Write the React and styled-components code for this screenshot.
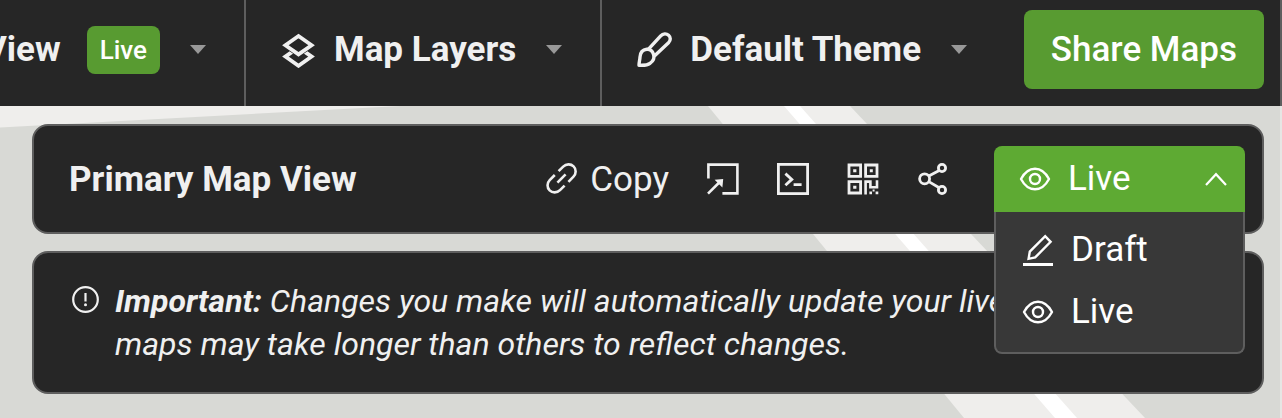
import React, { useState } from "react";
import styled, { createGlobalStyle } from "styled-components";

const GlobalStyle = createGlobalStyle`
  * {
    box-sizing: border-box;
  }

  html, body, #root {
    height: 100%;
  }

  body {
    margin: 0;
    overflow: hidden;
    background: #d8d9d5;
    color: #f0f0f0;
    font-family: Roboto, "Liberation Sans", sans-serif;
  }

  button {
    font-family: inherit;
    color: inherit;
    border: none;
    background: transparent;
    cursor: pointer;
  }
`;

const Page = styled.div`
  display: flex;
  flex-direction: column;
  min-height: 100%;
`;

const TopBar = styled.header`
  display: flex;
  background: #262626;
  border-right: 2px solid #5e5e5e;
`;

const BarMenu = styled.button`
  display: flex;
  align-items: center;
  justify-content: ${props => props.$alignEnd ? "flex-end" : "flex-start"};
  width: ${props => props.$alignEnd ? "246px" : "auto"};
  padding: 10px 38px 17px 35px;
  border-right: ${props => props.$last ? "none" : "2px solid #5e5e5e"};
  font-size: 35px;
  font-weight: 700;
  line-height: 43px;
  white-space: nowrap;
`;

const BarLabel = styled.span`
  margin: 0 30px 0 ${props => props.$withIcon ? "17px" : "0"};
`;

const Badge = styled.span`
  margin: 0 30px 0 -4px;
  padding: 0 13px;
  border-radius: 8px;
  background: #589b31;
  color: #fff;
  font-size: 26px;
  font-weight: 500;
  line-height: 48px;
`;

const Caret = styled.span`
  border-top: 9px solid #989898;
  border-left: 8px solid transparent;
  border-right: 8px solid transparent;
`;

const ShareArea = styled.div`
  flex: 1;
  display: flex;
  justify-content: flex-end;
  padding: 10px 16px 17px 0;
`;

const ShareButton = styled.button`
  padding: 0 27px;
  border-radius: 8px;
  background: #589b31;
  color: #fff;
  font-size: 35px;
  font-weight: 500;
  line-height: 79px;
  white-space: nowrap;
`;

const MapArea = styled.main`
  position: relative;
  flex: 1;
  display: flex;
  flex-direction: column;
  gap: 17px;
  padding: 18px 16px 24px 32px;
  border-right: 2px solid #e6e6e4;
`;

const MapDrawing = styled.svg`
  position: absolute;
  top: 0;
  left: 0;
`;

const Panel = styled.section`
  position: relative;
  display: flex;
  border: 2px solid #5e5e5e;
  border-radius: 16px;
  background: #262626;
`;

const ViewPanel = styled(Panel)`
  z-index: 1;
  align-items: center;
  padding: 20px 17px 20px 35px;
`;

const NoticePanel = styled(Panel)`
  align-items: flex-start;
  gap: 16px;
  padding: 27px 35px 26px 38px;
`;

const ViewTitle = styled.h1`
  flex: 1;
  margin: 0;
  font-size: 35px;
  font-weight: 700;
  line-height: 43px;
`;

const Actions = styled.div`
  display: flex;
  align-items: center;
  gap: 38px;
  margin-right: 45px;
`;

const ActionButton = styled.button`
  display: flex;
  align-items: center;
  gap: 12px;
  padding: 0;
  font-size: 35px;
  line-height: 43px;
`;

const Dropdown = styled.div`
  position: relative;
  width: 251px;
`;

const DropdownToggle = styled.button`
  display: flex;
  align-items: center;
  gap: 17px;
  width: 100%;
  padding: 0 18px 0 25px;
  border-radius: ${props => props.$open ? "8px 8px 0 0" : "8px"};
  background: #5eaa33;
  color: #fff;
  font-size: 35px;
  line-height: 66px;
  text-align: left;
`;

const DropdownLabel = styled.span`
  flex: 1;
`;

const DropdownMenu = styled.ul`
  position: absolute;
  top: 100%;
  left: 0;
  right: 0;
  margin: 0;
  padding: 7px 0 9px;
  border: 2px solid #5e5e5e;
  border-top: none;
  border-radius: 0 0 8px 8px;
  background: #383838;
  list-style: none;
`;

const DropdownItem = styled.button`
  display: flex;
  align-items: center;
  gap: 17px;
  width: 100%;
  padding: 0 26px;
  color: #fff;
  font-size: 35px;
  line-height: 62px;
`;

const NoticeText = styled.p`
  margin: 0;
  font-size: 32px;
  font-style: italic;
  line-height: 43px;
`;

const Icon = styled.svg`
  display: block;
  flex: none;
  fill: none;
  stroke: currentColor;
`;

const LayersIcon = () => (
  <Icon width="36" height="36" viewBox="0 0 36 36" strokeWidth="3.8">
    <path d="M17.5 15.4 30.6 24.6 17.5 33.8 4.4 24.6Z"/>
    <path d="M17.5 4 30.6 13.2 17.5 22.4 4.4 13.2Z" fill="#262626" stroke="#262626" strokeWidth="5"/>
    <path d="M17.5 4 30.6 13.2 17.5 22.4 4.4 13.2Z"/>
  </Icon>
);

const BrushIcon = () => (
  <Icon width="36" height="36" viewBox="0 0 36 36" strokeWidth="3.4" strokeLinejoin="round">
    <path d="M9.800 17.200C4.500 17.800 3.200 22 3 25C2.800 28.500 2 30 2 33.200C6 33.500 10.500 33.200 13 31.300C16.500 29 17.600 26 16.600 22.500C15.600 19 13 17 9.800 17.200Z"/>
    <path d="M11.500 17.200 23.700 3.900C26 1.400 29.400 1.300 31.600 3.200C33.800 5.200 33.900 8.400 31.500 10.800L17.400 24"/>
  </Icon>
);

const LinkIcon = () => (
  <Icon width="32" height="32" viewBox="0 0 32 32" strokeWidth="2.600">
    <path d="M12.600 8.200 17.200 3.600C20.200.7 24.800.7 27.600 3.400C30.400 6.200 30.300 10.700 27.500 13.600L22.400 18.800"/>
    <path d="M18.600 22.600 14 27.200C11 30.100 6.400 30.100 3.600 27.400C.8 24.600.9 20.100 3.700 17.200L8.800 12"/>
    <path d="M11.400 19.600 19.600 11.400"/>
  </Icon>
);

const EmbedIcon = () => (
  <Icon width="32" height="32" viewBox="0 0 32 32" strokeWidth="2.600">
    <path d="M1.400 15.400V1.600H30.400V30.400H15.400"/>
    <path d="M1 30.600 13 18.800"/>
    <path d="M7.600 16.800 16.200 16 15.400 24.400Z" fill="currentColor" stroke="none"/>
  </Icon>
);

const TerminalIcon = () => (
  <Icon width="32" height="32" viewBox="0 0 32 32" strokeWidth="2.800">
    <rect x="1.400" y="1.400" width="29.200" height="29.200"/>
    <path d="M8.400 10.600 14.800 16.400 8.400 22.200M16.600 21.600H24.600"/>
  </Icon>
);

const QrIcon = () => (
  <Icon width="32" height="32" viewBox="0 0 32 32" strokeWidth="2.800">
    <path d="M2 2H13.600V13.400H2ZM18.600 2H30V13.400H18.600ZM2 18.600H13.600V30H2Z"/>
    <path
      d="M6.200 6.200H9.400V9.200H6.200ZM22.800 6.200H25.800V9.200H22.800ZM6.200 22.800H9.400V25.800H6.200ZM22.400 28.500H25V31.200H22.400ZM28.600 28.500H31.300V31.200H28.600ZM25.600 26.400H27.600V28.500H25.600Z"
      fill="currentColor"
      stroke="none"
    />
    <path d="M18.600 31.400V18.600H23.400V24.200H30V17.200" strokeWidth="2.600"/>
  </Icon>
);

const ShareIcon = () => (
  <Icon width="32" height="32" viewBox="-1 0 32 32" strokeWidth="2.800">
    <circle cx="6.600" cy="15.800" r="5"/>
    <circle cx="24" cy="5" r="3.600"/>
    <circle cx="24" cy="27" r="3.600"/>
    <path d="M10.800 13 21.200 7.400M10.800 18.600 21.200 24.700"/>
  </Icon>
);

const EyeIcon = () => (
  <Icon width="32" height="32" viewBox="0 0 32 32" strokeWidth="2.400">
    <path d="M2 16C5.600 9.200 10.400 5.700 16 5.700S26.400 9.200 30 16C26.400 22.800 21.600 26.300 16 26.300S5.600 22.800 2 16Z" strokeLinejoin="round"/>
    <circle cx="16" cy="16" r="5"/>
  </Icon>
);

const DraftIcon = () => (
  <Icon width="32" height="32" viewBox="0 0 32 32" strokeWidth="2.400">
    <path d="M1 30.500H31" strokeWidth="3"/>
    <path d="M6.600 24.800 7.800 17.600 23.200 2.200 28.600 7.800 13.200 23.400ZM19 6.400"/>
  </Icon>
);

const ChevronUpIcon = () => (
  <Icon width="22" height="14" viewBox="0 0 22 14" strokeWidth="2.200">
    <path d="M1 13 11 2.200 21 13"/>
  </Icon>
);

const NoticeIcon = () => (
  <Icon width="27" height="38" viewBox="0 0 27 38" strokeWidth="2.200">
    <circle cx="13.500" cy="19.500" r="12.300"/>
    <path d="M13.500 13V21.500"/>
    <circle cx="13.500" cy="24.800" r="1.500" fill="currentColor" stroke="none"/>
  </Icon>
);

const statuses = [
  { name: "Draft", icon: <DraftIcon/> },
  { name: "Live", icon: <EyeIcon/> }
];

const App = () => {
  const [isOpen, setIsOpen] = useState(true);
  const [status, setStatus] = useState("Live");

  const current = statuses.find(item => item.name === status);

  const selectStatus = name => {
    setStatus(name);
    setIsOpen(false);
  };

  return (
    <Page>
      <GlobalStyle/>
      <TopBar>
        <BarMenu $alignEnd>
          <BarLabel>View</BarLabel>
          <Badge>Live</Badge>
          <Caret/>
        </BarMenu>
        <BarMenu>
          <LayersIcon/>
          <BarLabel $withIcon>Map Layers</BarLabel>
          <Caret/>
        </BarMenu>
        <BarMenu $last>
          <BrushIcon/>
          <BarLabel $withIcon>Default Theme</BarLabel>
          <Caret/>
        </BarMenu>
        <ShareArea>
          <ShareButton>Share Maps</ShareButton>
        </ShareArea>
      </TopBar>
      <MapArea>
        <MapDrawing width="1280" height="312" viewBox="0 0 1280 312">
          <path d="M0 0H400L0 21.500Z" fill="#efeeec"/>
          <path d="M708 0H850L1145 312H964Z" fill="#efeeec"/>
          <path d="M784 0H800L1077 312H1055Z" fill="#fff"/>
        </MapDrawing>
        <ViewPanel>
          <ViewTitle>Primary Map View</ViewTitle>
          <Actions>
            <ActionButton><LinkIcon/> Copy</ActionButton>
            <ActionButton aria-label="Embed"><EmbedIcon/></ActionButton>
            <ActionButton aria-label="Script"><TerminalIcon/></ActionButton>
            <ActionButton aria-label="QR code"><QrIcon/></ActionButton>
            <ActionButton aria-label="Share"><ShareIcon/></ActionButton>
          </Actions>
          <Dropdown>
            <DropdownToggle
              $open={isOpen}
              aria-expanded={isOpen}
              onClick={() => setIsOpen(!isOpen)}
            >
              {current.icon}
              <DropdownLabel>{current.name}</DropdownLabel>
              <ChevronUpIcon/>
            </DropdownToggle>
            {isOpen &&
            <DropdownMenu>
              {statuses.map(item => (
                <li key={item.name}>
                  <DropdownItem onClick={() => selectStatus(item.name)}>
                    {item.icon} {item.name}
                  </DropdownItem>
                </li>
              ))}
            </DropdownMenu>
            }
          </Dropdown>
        </ViewPanel>
        <NoticePanel>
          <NoticeIcon/>
          <NoticeText>
            <strong>Important:</strong> Changes you make will automatically update your live
            <br/>
            maps may take longer than others to reflect changes.
          </NoticeText>
        </NoticePanel>
      </MapArea>
    </Page>
  );
};

export default App;
